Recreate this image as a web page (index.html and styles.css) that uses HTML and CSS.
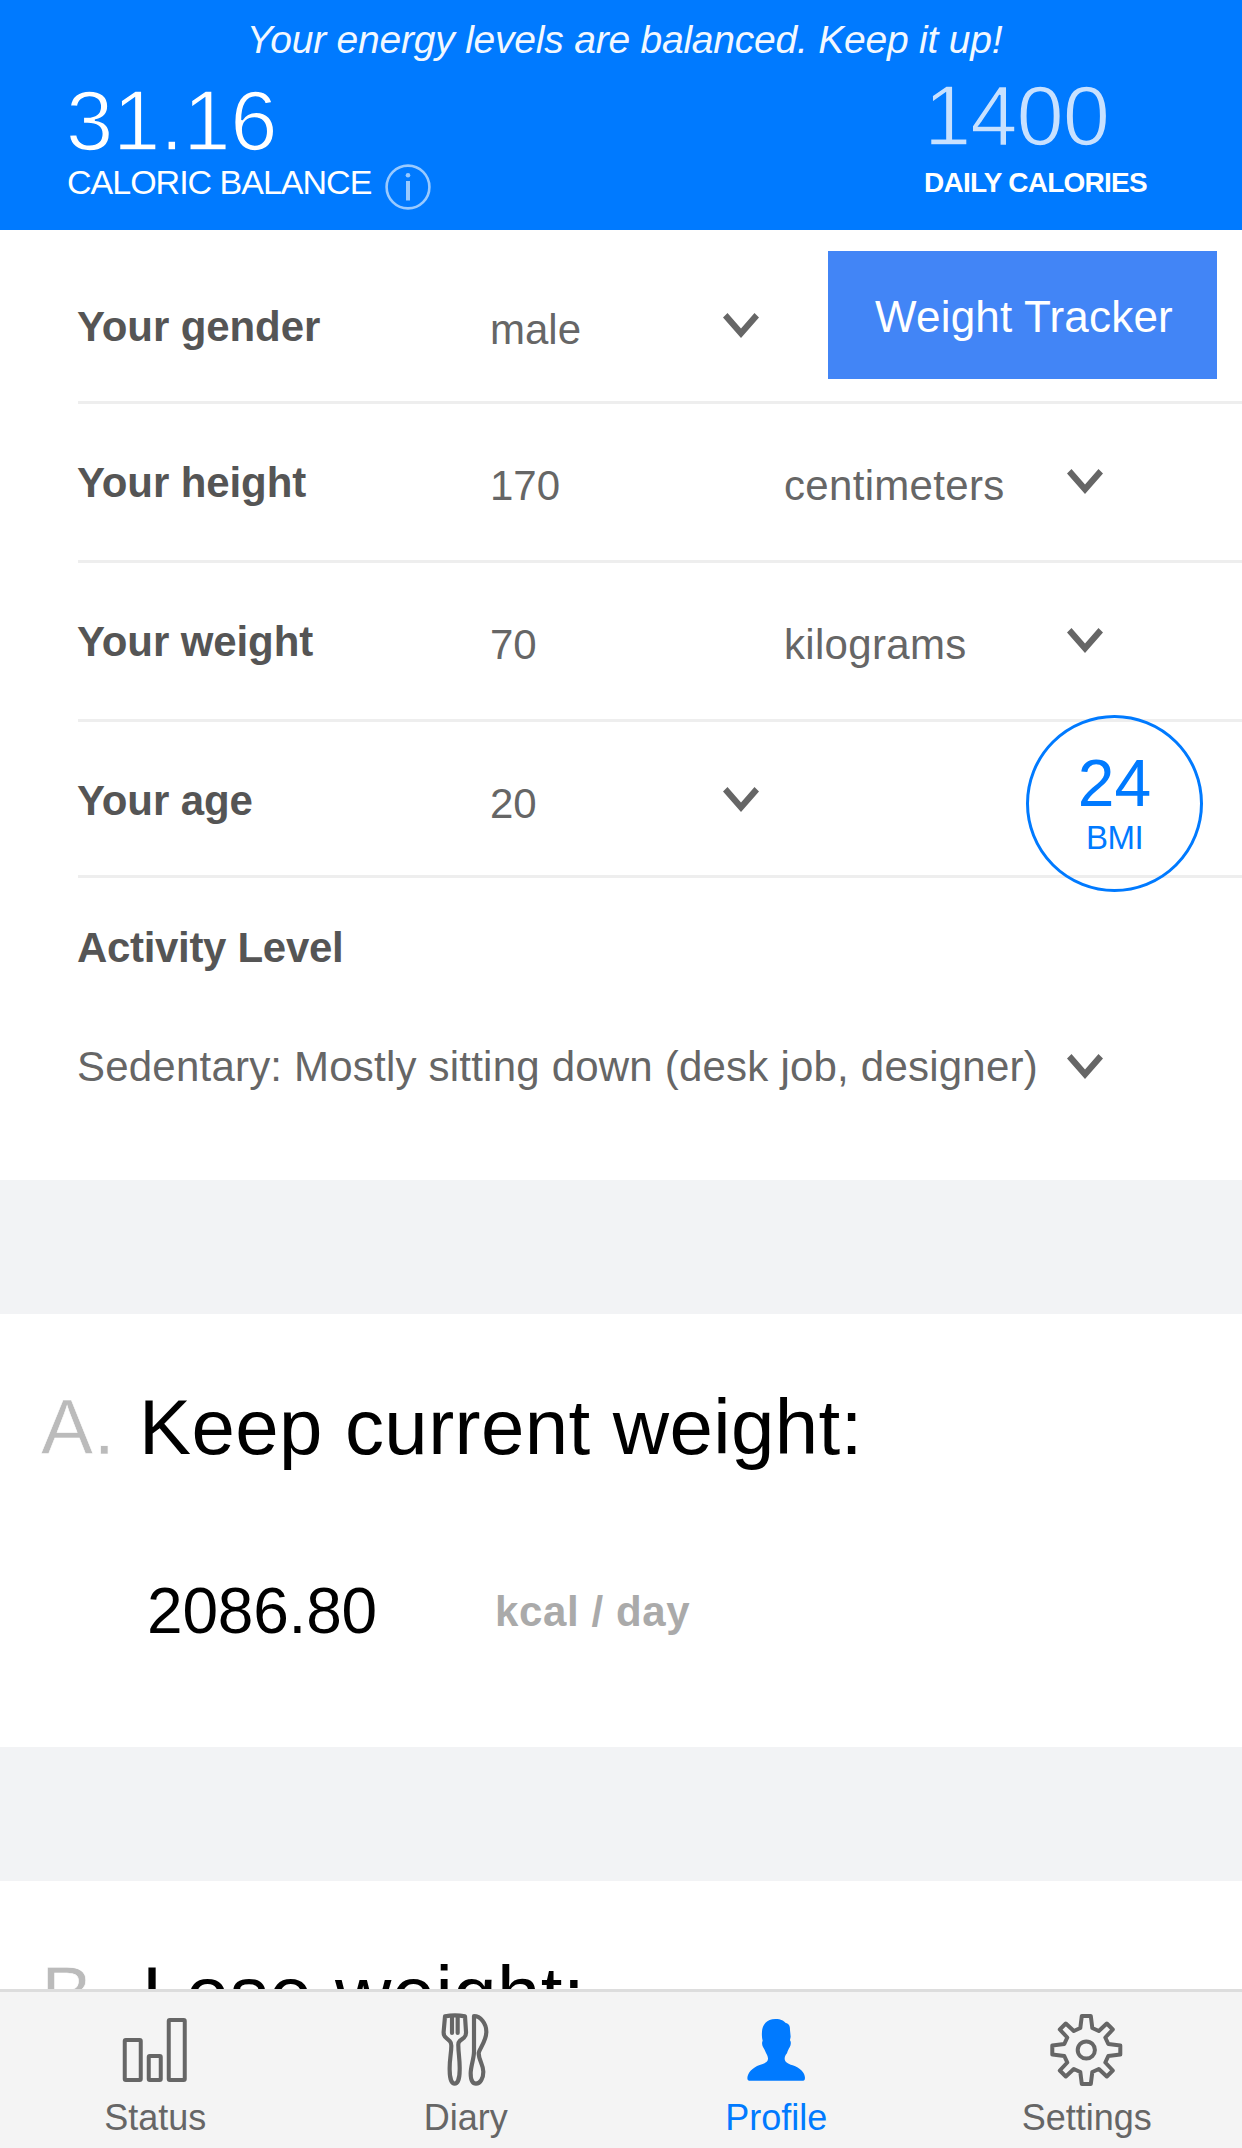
FILE: index.html
```html
<!DOCTYPE html>
<html lang="en">
<head>
<meta charset="utf-8">
<title>Profile</title>
<link rel="stylesheet" href="styles.css">
</head>
<body>
<svg width="0" height="0" class="defs">
  <symbol id="chevron" viewBox="0 0 36 25"><path d="M0 4.5 4.5 0 18 15.5 31.5 0 36 4.5 18 25Z"/></symbol>
</svg>
<div class="app">
  <header class="summary">
    <p class="tagline">Your energy levels are balanced. Keep it up!</p>
    <div class="stats">
      <div class="stat">
        <div class="figure">31.16</div>
        <div class="caption"><span class="caption-text">CALORIC BALANCE</span>
          <svg class="info" viewBox="0 0 46 46"><circle cx="23" cy="23" r="21.4"/><path d="M23 17V36.5"/><circle class="dot" cx="23" cy="11.3" r="2.3"/></svg>
        </div>
      </div>
      <div class="stat daily">
        <div class="figure">1400</div>
        <div class="caption-bold">DAILY CALORIES</div>
      </div>
    </div>
  </header>

  <main>
    <section class="form">
      <div class="row first">
        <label class="label">Your gender</label>
        <span class="value">male</span>
        <svg class="chevron"><use href="#chevron"/></svg>
        <button class="tracker">Weight Tracker</button>
      </div>
      <div class="row measure">
        <label class="label">Your height</label>
        <span class="value">170</span>
        <span class="value measure-unit">centimeters</span>
        <svg class="chevron"><use href="#chevron"/></svg>
      </div>
      <div class="row measure">
        <label class="label">Your weight</label>
        <span class="value">70</span>
        <span class="value measure-unit">kilograms</span>
        <svg class="chevron"><use href="#chevron"/></svg>
      </div>
      <div class="row last">
        <label class="label">Your age</label>
        <span class="value">20</span>
        <svg class="chevron"><use href="#chevron"/></svg>
        <div class="bmi"><span class="bmi-value">24</span><span class="bmi-label">BMI</span></div>
      </div>
      <div class="activity">
        <div class="label activity-label">Activity Level</div>
        <div class="activity-pick">
          <span class="activity-text">Sedentary: Mostly sitting down (desk job, designer)</span>
          <svg class="chevron"><use href="#chevron"/></svg>
        </div>
      </div>
    </section>

    <section class="goal">
      <h2 class="goal-title"><span class="letter">A.</span><span class="goal-name">Keep current weight:</span></h2>
      <div class="goal-data"><span class="amount">2086.80</span><span class="unit">kcal / day</span></div>
    </section>

    <section class="goal">
      <h2 class="goal-title"><span class="letter letter-wide">B.</span><span class="goal-name">Lose weight:</span></h2>
    </section>
  </main>

  <nav class="tabs">
    <a class="tab">
      <svg class="icon" viewBox="0 0 80 80"><g class="line"><rect x="9.75" y="32" width="16" height="40" rx="1"/><rect x="33.75" y="48" width="12" height="24" rx="1"/><rect x="53.75" y="12" width="16" height="60" rx="1"/></g></svg>
      <span>Status</span>
    </a>
    <a class="tab">
      <svg class="icon" viewBox="2 9 240 240"><g class="line cutlery"><path d="M59 34Q89 28 119 34L122 80Q123 92 116 98L103 108Q98 113 99 122C99 145 104 165 103 195C103 222 96 236 88 236C80 236 73 222 73 195C72 165 78 145 78 122Q78 113 73 108L62 98Q54 92 55 80Z"/><path d="M80 34V84M97 34V84"/><path d="M146 33V140C146 160 136 185 136 205C136 225 141 236 152 236C165 236 174 220 174 200C174 180 160 165 160 144C162 130 183 110 183 80C183 55 165 33 146 33Z"/></g></svg>
      <span>Diary</span>
    </a>
    <a class="tab active">
      <svg class="icon" viewBox="-12 9 240 240"><path class="solid" d="M106 42C124 42 132 48 136 53C148 57 150 62 150 75L152 95C151 100 150 104 150 106C154 110 153 120 149 127C146 131 143 138 141 145C136 150 135 154 134 160C134 172 142 176 158 181C180 188 195 203 195 219Q195 227 190 227H27Q22 227 22 220C23 203 37 188 59 180C75 175 84 172 84 160C83 152 80 148 77 142C75 135 71 130 69 126C66 120 65 112 68 107C66 100 65 90 66 80C67 60 80 42 106 42Z"/></svg>
      <span>Profile</span>
    </a>
    <a class="tab">
      <svg class="icon" viewBox="-39.3 -42 80 80"><g class="line"><circle r="8.6"/><path d="M-4.5-34H4.5L6-22 12.5-19 20.5-26.5 26.5-20.5 19-12.5 22-6 34-4.5V4.5L22 6 19 12.5 26.5 20.5 20.5 26.5 12.5 19 6 22 4.5 34H-4.5L-6 22-12.5 19-20.5 26.5-26.5 20.5-19 12.5-22 6-34 4.5V-4.5L-22-6-19-12.5-26.5-20.5-20.5-26.5-12.5-19-6-22Z"/></g></svg>
      <span>Settings</span>
    </a>
  </nav>
</div>
</body>
</html>
```
FILE: styles.css
```css
* { box-sizing: border-box; }
body {
  margin: 0;
  background: #f2f3f5;
  color: #666;
  font-family: "Liberation Sans", Arial, Helvetica, sans-serif;
}
.defs { display: block; }
.app { display: flex; flex-direction: column; height: 2148px; overflow: hidden; }

/* Header */
.summary { flex: none; height: 230px; background: #007aff; color: #fff; }
.tagline {
  margin: 0;
  padding: 15px 0 0 7px;
  font-size: 39px;
  font-style: italic;
  line-height: 50px;
  letter-spacing: -.22px;
  text-align: center;
  opacity: .95;
}
.stats { display: flex; justify-content: space-between; padding: 0 96px 0 66px; }
.figure {
  padding-top: 11px;
  font-size: 85px;
  line-height: 90px;
  letter-spacing: -.3px;
  -webkit-text-stroke: 1.6px #007aff;
}
.daily .figure { padding-top: 6px; color: #c8e1ff; letter-spacing: -1px; }
.caption { display: flex; height: 50px; padding-left: 1px; }
.caption-text { font-size: 34px; line-height: 32px; letter-spacing: -1px; }
.info {
  width: 46px;
  height: 46px;
  margin: -2px 0 0 14px;
  fill: none;
  stroke: rgba(255,255,255,.6);
  stroke-width: 2.6;
}
.info path { stroke-width: 4; }
.info .dot { fill: rgba(255,255,255,.6); stroke: none; }
.daily { width: 222px; }
.caption-bold { padding-top: 2px; font-size: 28px; font-weight: bold; line-height: 40px; letter-spacing: -.75px; white-space: nowrap; }

/* Form */
.form { height: 950px; padding-left: 78px; background: #fff; }
.row {
  display: grid;
  grid-template-columns: 412px 233px 105px 1fr;
  align-items: start;
  height: 159px;
  padding-top: 48px;
  border-bottom: 3px solid #eee;
}
.measure { grid-template-columns: 412px 294px 283px 1fr; }
.first { height: 174px; padding-top: 66px; }
.last { height: 156px; }
.label { margin: 1px 0 -1px -1px; color: #555; font-size: 42px; font-weight: bold; line-height: 60px; letter-spacing: -.1px; }
.activity-label { letter-spacing: -.32px; }
.value { margin-top: 4px; font-size: 42px; line-height: 60px; }
.measure-unit { letter-spacing: .32px; }
.chevron { display: block; width: 36px; height: 25px; margin-top: 17px; fill: #666; }
.tracker {
  width: 389px;
  height: 128px;
  margin-top: -45px;
  padding: 3px 0 0 3px;
  border: 0;
  background: #4285f6;
  color: #fff;
  font: 44px/125px "Liberation Sans", Arial, sans-serif;
  letter-spacing: .2px;
}
.bmi {
  display: flex;
  flex-direction: column;
  align-items: center;
  z-index: 1;
  width: 177px;
  height: 177px;
  margin: -55px 0 0 198px;
  padding-top: 32px;
  border: 3px solid #007aff;
  border-radius: 50%;
  color: #007aff;
}
.bmi-value { font-size: 66px; line-height: 66px; }
.bmi-label { padding-top: 5px; font-size: 33px; line-height: 34px; letter-spacing: -.5px; }
.activity { padding-top: 39px; }
.activity-pick { display: flex; padding-top: 60px; }
.activity-text { width: 990px; margin-left: -1px; font-size: 42px; line-height: 60px; letter-spacing: .21px; white-space: nowrap; }

/* Calorie goals */
.goal { height: 433px; margin-bottom: 134px; padding: 65px 0 0 41px; background: #fff; }
.form + .goal { margin-top: 134px; }
.goal-title { display: flex; margin: 0; color: #000; font-size: 78px; font-weight: normal; line-height: 96px; letter-spacing: .42px; }
.letter { width: 98px; color: #bbb; -webkit-text-stroke: .6px #fff; }
.letter-wide { width: 101px; }
.goal-data { display: flex; padding: 86px 0 0 106px; }
.amount { width: 348px; color: #000; font-size: 64px; line-height: 100px; letter-spacing: -.2px; }
.unit { padding-top: 1px; color: #aaa; font-size: 42px; font-weight: bold; line-height: 100px; letter-spacing: .6px; }

/* Tab bar */
.app main { flex: none; height: 1759px; overflow: hidden; }
.tabs { display: flex; flex: none; height: 159px; border-top: 3px solid #ddd; background: #f4f4f4; }
.tab { display: flex; flex: 1; flex-direction: column; align-items: center; padding-top: 16px; font-size: 36px; line-height: 50px; }
.icon { width: 80px; height: 80px; margin-bottom: 5px; }
.line { fill: none; stroke: #666; stroke-width: 4; stroke-linejoin: round; }
.cutlery { stroke-width: 12.5; stroke-linecap: round; }
.active { color: #007aff; }
.solid { fill: #007aff; }
```
